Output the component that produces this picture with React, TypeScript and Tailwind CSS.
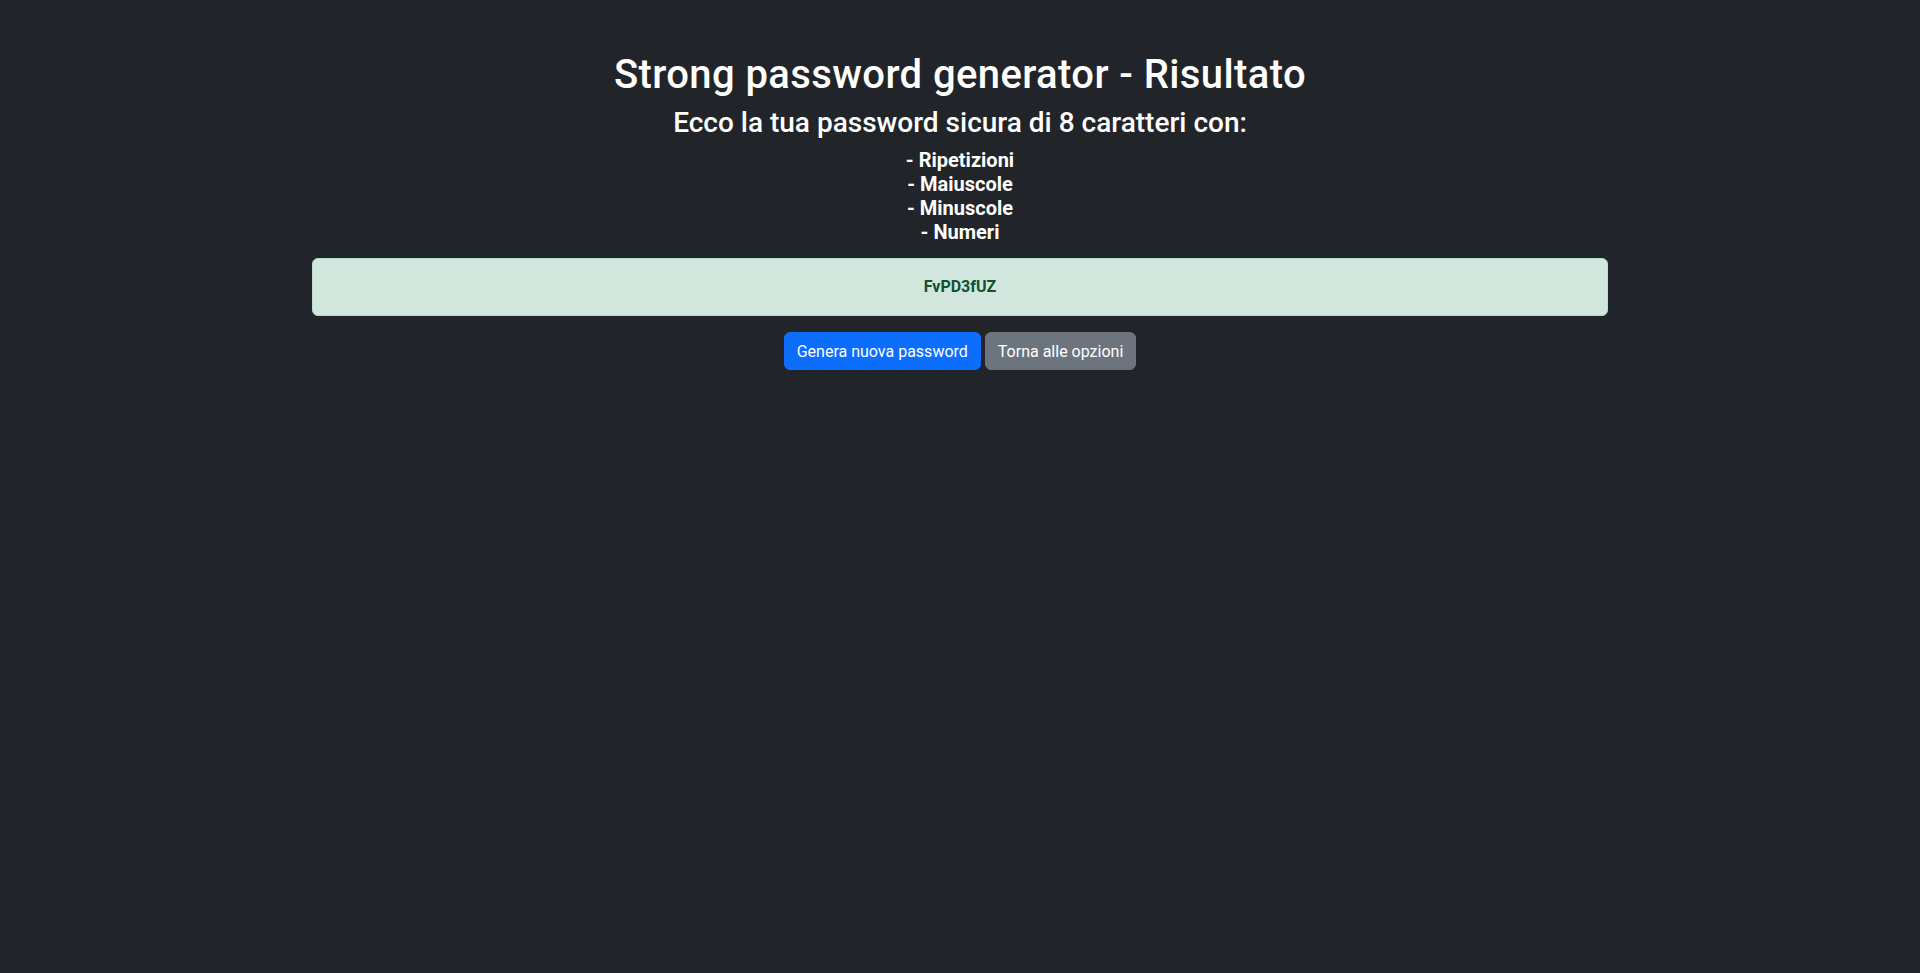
import React, { useState } from 'react';

export default function App() {
  const [password] = useState('FvPD3fUZ');
  const options = ['Ripetizioni', 'Maiuscole', 'Minuscole', 'Numeri'];

  return (
    <div className="min-h-screen bg-[#212529] text-white font-['Segoe_UI',Roboto,'Liberation_Sans',sans-serif]">
      <div className="mx-auto max-w-[1320px] px-3 pt-12 text-center">
        <h1 className="mb-[5px] pt-[3px] text-[40px] leading-[1.2] font-medium tracking-[0.4px]">
          Strong password generator - Risultato
        </h1>
        <h3 className="mb-[6px] pt-[2px] text-[28px] leading-[1.2] font-medium">
          Ecco la tua password sicura di {password.length} caratteri con:
        </h3>
        <h5 className="mb-[14px] pt-[2px] text-[20px] leading-[1.2] font-bold">
          {options.map((o) => (
            <div key={o}>- {o}</div>
          ))}
        </h5>

        <div className="mb-4 rounded-md border border-[#badbcc] bg-[#d1e7dd] p-4 text-base leading-6 font-bold text-[#0f5132]">
          {password}
        </div>

        <div className="flex justify-center gap-1">
          <button className="rounded-md border border-[#0d6efd] bg-[#0d6efd] px-3 pt-[7px] pb-[5px] text-base leading-6 text-white">
            Genera nuova password
          </button>
          <button className="rounded-md border border-[#6c757d] bg-[#6c757d] px-3 pt-[7px] pb-[5px] text-base leading-6 text-white">
            Torna alle opzioni
          </button>
        </div>
      </div>
    </div>
  );
}
